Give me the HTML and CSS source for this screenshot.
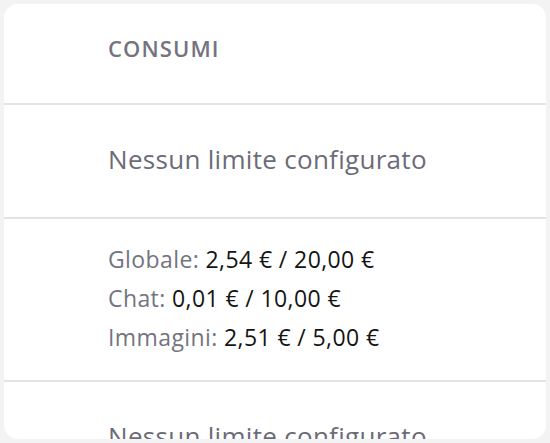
FILE: index.html
```html
<!DOCTYPE html>
<html>
<head>
    <meta charset="utf-8" />
    <title>Consumi</title>
    <link rel="stylesheet" href="styles.css">
</head>
<body>
    <div class="card">
        <div class="section header">
            <h2 class="title">CONSUMI</h2>
        </div>
        <div class="section empty">
            Nessun limite configurato
        </div>
        <div class="section usage">
            <div class="row"><span class="label">Globale:</span> <span class="value">2,54 € / 20,00 €</span></div>
            <div class="row"><span class="label">Chat:</span> <span class="value">0,01 € / 10,00 €</span></div>
            <div class="row"><span class="label">Immagini:</span> <span class="value">2,51 € / 5,00 €</span></div>
        </div>
        <div class="section empty">
            Nessun limite configurato
        </div>
    </div>
</body>
</html>
```

FILE: styles.css
```css
*
{
    box-sizing: border-box;
}

html, body
{
    margin: 0;
    height: 100%;
}

body
{
    padding: 4px;
    background-color: #f3f3f3;
    font-family: 'Open Sans', 'Noto Sans', sans-serif;
}

.card
{
    height: 435px;
    background-color: #ffffff;
    border-radius: 14px;
    overflow: hidden;
}

.section
{
    padding-left: 104px;
    border-bottom: 2px solid #e4e4e6;
}

.header
{
    padding-top: 30px;
    padding-bottom: 41px;
}

.title
{
    margin: 0;
    font-size: 22px;
    line-height: 28px;
    font-weight: 600;
    color: #74747f;
    letter-spacing: 1.1px;
}

.empty
{
    padding-top: 36px;
    padding-bottom: 40px;
    font-size: 26px;
    line-height: 36px;
    color: #6c6c78;
    letter-spacing: 0.3px;
}

.usage
{
    padding-top: 21px;
    padding-bottom: 23px;
    font-size: 23px;
    line-height: 39px;
    letter-spacing: 0.4px;
}

.label
{
    color: #747480;
}

.value
{
    color: #141414;
}
```
